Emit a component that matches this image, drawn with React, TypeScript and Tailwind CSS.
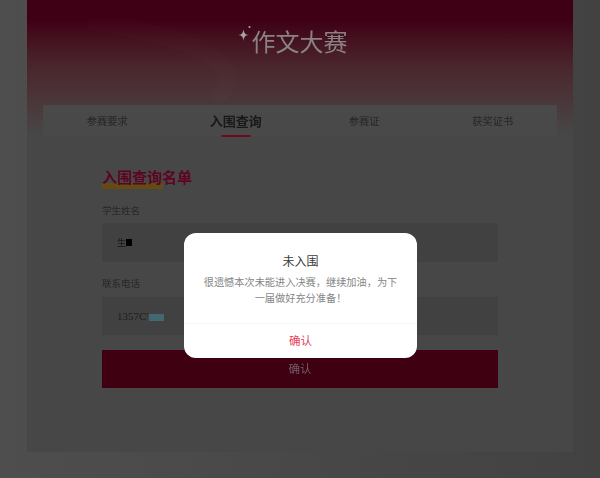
export default function App() {
  const cjk = { fontFamily: '"Noto Sans CJK SC", sans-serif' };
  return (
    <div className="relative h-[478px] w-[600px] overflow-hidden bg-gradient-to-r from-[#4e4e4e] to-[#424242]" style={cjk}>
      <div className="mx-auto h-[452px] w-[546px] bg-[#474747] blur-[0.4px]">
        <header className="relative h-[135px] bg-gradient-to-b from-[#3f0016] from-[15%] via-[#4a262d] via-[50%] to-[#474747] pt-[24px]">
          <svg className="absolute left-[60px] top-[20px] h-[80px] w-[170px]" viewBox="0 0 170 80" fill="none">
            <path d="M0 0C60 10 130 25 140 55C142 65 135 72 128 80" stroke="#ffffff" strokeOpacity="0.012" strokeWidth="18" />
          </svg>
          <div className="relative flex items-start justify-center pr-[15px]">
            <svg className="mt-[1px] h-[16px] w-[14px]" viewBox="0 0 14 16" fill="#a9a0a2">
              <path d="M5.5 4C6 8 7 9.5 10.5 10C7 10.5 6 12 5.500 16C5 12 4 10.500 .5 10C4 9.500 5 8 5.500 4Z" />
              <circle cx="11.500" cy="2" r="1.100" />
            </svg>
            <h1 className="mt-[3px] text-[24px] leading-[32px] font-normal text-[#8a8284]" style={{ fontFamily: '"Liberation Serif", "Noto Sans CJK SC", serif' }}>作文大赛</h1>
          </div>
        </header>
        <nav className="relative mx-4 -mt-[30px] grid h-[31px] grid-cols-4 items-center bg-[#494949] text-center text-[10.25px] text-[#262626]">
          <span>参赛要求</span>
          <span className="relative text-[13px] font-bold text-[#181818]">
            入围查询
            <span className="absolute bottom-[-7px] left-1/2 h-[2px] w-[29px] -translate-x-1/2 bg-[#700820]" />
          </span>
          <span>参赛证</span>
          <span>获奖证书</span>
        </nav>
        <main className="px-[75px] pt-[31px]">
          <h2 className="relative text-[15px] leading-[20px] font-bold text-[#5f0420]">
            <span className="absolute top-[16px] left-0 h-[6px] w-[61px] bg-[#644a14]" />
            <span className="relative">入围查询名单</span>
          </h2>
          <label className="mt-[16px] block text-[9.500px] leading-[14px] text-[#282828]">学生姓名</label>
          <div className="mt-[6px] flex h-[39px] items-center bg-[#414141] px-[15px] text-[9px] text-[#181818]">
            生<span className="h-[7px] w-[6px] bg-black" />
          </div>
          <label className="mt-[14px] block text-[9.500px] leading-[14px] text-[#282828]">联系电话</label>
          <div className="mt-[7px] flex h-[38px] items-center bg-[#414141] px-[15px] text-[11px] text-[#1e1e1e]" style={{ fontFamily: '"Liberation Serif", serif' }}>
            1357C'<span className="mt-[2px] ml-[1px] h-[7px] w-[15px] bg-[#426874]" />
          </div>
          <button className="mt-[15px] flex h-[38px] w-full items-center justify-center bg-[#3f0012] text-[11.500px] text-[#735c66]">确认</button>
        </main>
      </div>
      <div role="dialog" className="absolute top-[233px] left-[184px] flex h-[125px] w-[233px] flex-col rounded-[12px] bg-white text-center">
        <h3 className="mt-[19px] text-[12px] leading-[17px] font-normal text-[#3c3c3c]">未入围</h3>
        <p className="mx-[19px] mt-[5px] text-[10.200px] leading-[15.500px] text-[#858585]">很遗憾本次未能进入决赛，继续加油，为下一届做好充分准备！</p>
        <div className="mt-auto flex h-[35px] items-center justify-center border-t border-[#f6f6f6] text-[11.500px] text-[#e8415a]">确认</div>
      </div>
    </div>
  );
}
